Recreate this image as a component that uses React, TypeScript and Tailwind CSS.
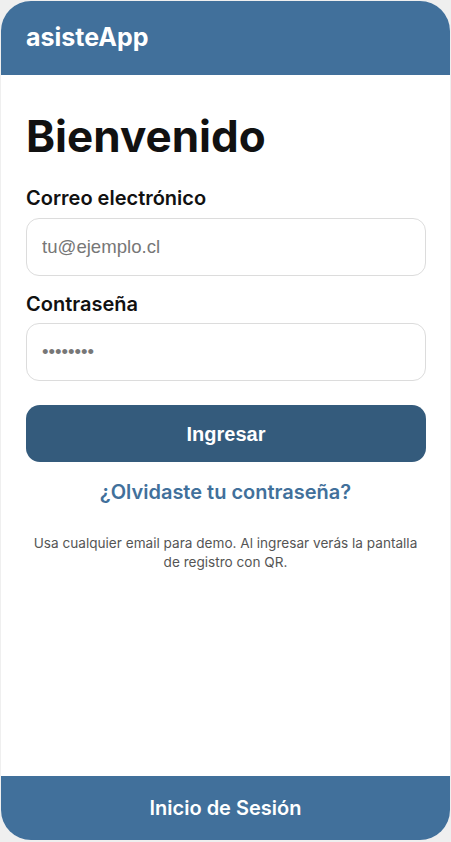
export default function App() {
  return (
    <div className="min-h-[842px] w-[451px] bg-[#efefef] pt-px pl-px" style={{ fontFamily: "Inter, 'Noto Sans', sans-serif" }}>
      <div className="flex h-[839px] w-[449px] flex-col overflow-hidden rounded-[30px] bg-white">
        <header className="flex h-[74px] shrink-0 items-center bg-[#41709b] px-[25px]">
          <h1 className="text-[25px] font-bold text-white">asisteApp</h1>
        </header>
        <main className="flex flex-1 flex-col px-[25px]">
          <h2 className="mt-[35px] text-[44px] font-bold leading-[52px] text-[#111]">Bienvenido</h2>
          <label className="mt-[24px] text-[20px] font-semibold leading-[24px] text-[#111]">Correo electrónico</label>
          <input
            className="mt-[8px] h-[58px] w-[400px] rounded-[13px] border border-[#dcdcdc] px-[15px] text-[18.6px] outline-none placeholder:text-[#777]"
            style={{ fontFamily: "'Liberation Sans', Arial, sans-serif" }}
            placeholder="tu@ejemplo.cl"
          />
          <label className="mt-[16px] text-[20px] font-semibold leading-[24px] text-[#111]">Contraseña</label>
          <input
            type="password"
            className="mt-[7px] h-[58px] w-[400px] rounded-[13px] border border-[#dcdcdc] px-[15px] text-[18.6px] text-[#777] outline-none"
            style={{ fontFamily: "'Liberation Sans', Arial, sans-serif" }}
            defaultValue="12345678"
          />
          <button
            className="mt-[24px] h-[57px] w-[400px] rounded-[14px] bg-[#345b7c] text-[20px] font-bold text-white"
            style={{ fontFamily: "'Liberation Sans', Arial, sans-serif" }}
          >
            Ingresar
          </button>
          <a className="mt-[17px] text-center text-[20px] font-semibold leading-[26px] text-[#41709b]">¿Olvidaste tu contraseña?</a>
          <p className="mx-auto mt-[29px] w-[392px] text-center text-[13.6px] leading-[19px] text-[#555]">
            Usa cualquier email para demo. Al ingresar verás la pantalla de registro con QR.
          </p>
        </main>
        <footer className="flex h-[64px] shrink-0 items-center justify-center bg-[#41709b]">
          <span className="text-[20px] font-semibold text-white">Inicio de Sesión</span>
        </footer>
      </div>
    </div>
  );
}
